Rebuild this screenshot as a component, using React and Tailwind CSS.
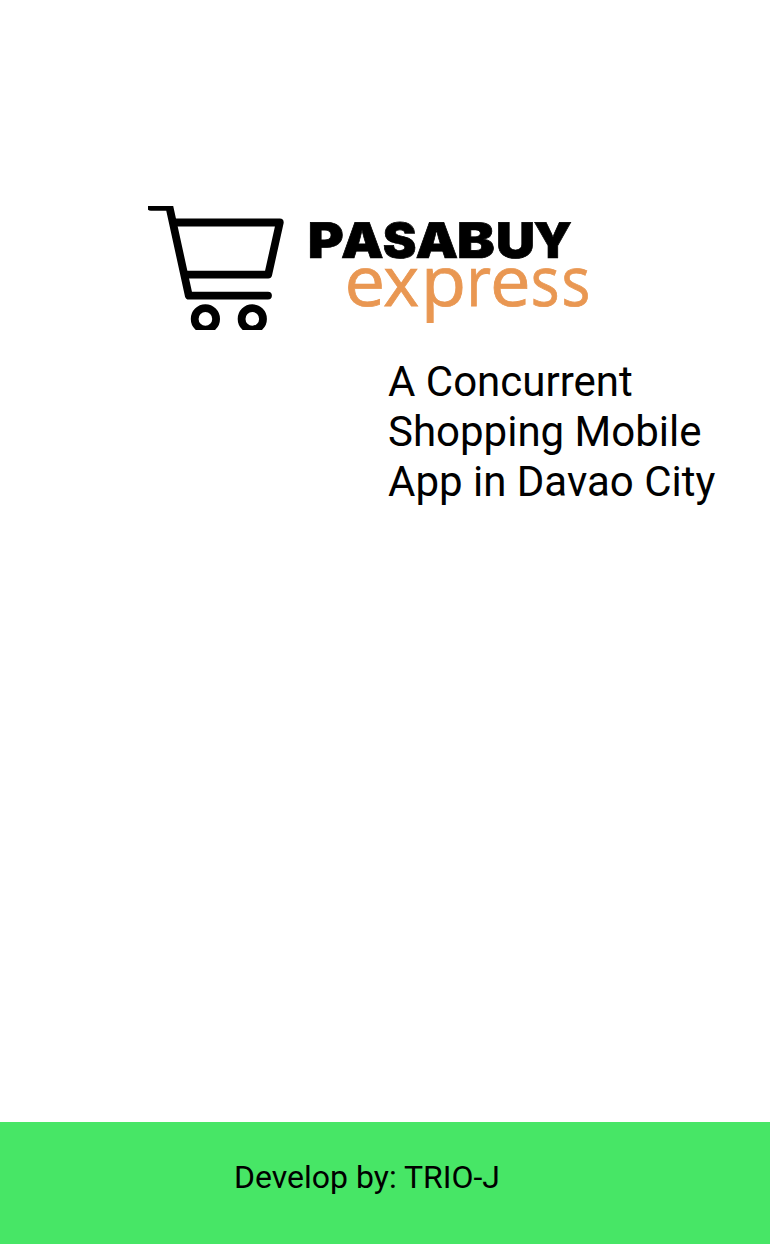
const TITLE = [
  ['P', 307.8, 36],
  ['A', 341, 42.7],
  ['S', 382.7, 33.7],
  ['A', 415.6, 42.7],
  ['B', 457, 37.8],
  ['U', 496, 39],
  ['Y', 533.4, 38.4],
];

const SUBTITLE = [
  ['e', 344.6, 40.6],
  ['x', 383.3, 35.8],
  ['p', 420.7, 45.5],
  ['r', 466.2, 24.8],
  ['e', 490, 40.6],
  ['s', 530.8, 28.8],
  ['s', 561.5, 28.8],
];

function Word({ letters, y, className }) {
  return (
    <text y={y} textRendering="geometricPrecision" className={className}>
      {letters.map(([char, x, width], i) => (
        <tspan key={i} x={x} textLength={width} lengthAdjust="spacingAndGlyphs">
          {char}
        </tspan>
      ))}
    </text>
  );
}

function Logo() {
  return (
    <svg
      className="block h-[124px] w-[442px] overflow-hidden"
      viewBox="148 206 442 124"
      role="img"
      aria-label="Pasabuy express"
    >
      <g fill="none" stroke="#000" strokeWidth="7.8" strokeLinecap="round" strokeLinejoin="round">
        <path d="M151 206.8H169.4L188.8 295.6H268" />
        <path d="M176 222.5H279.8L268.2 274.6H187" />
        <circle cx="205.4" cy="318.9" r="10.7" />
        <circle cx="252.3" cy="318.9" r="10.7" />
      </g>
      <Word
        letters={TITLE}
        y="258.2"
        className="fill-black stroke-black stroke-[0.7px] font-['Inter',sans-serif] text-[49px] font-black"
      />
      <Word
        letters={SUBTITLE}
        y="306.3"
        className="fill-[#e99752] stroke-[#e99752] stroke-[0.8px] font-['Open_Sans',sans-serif] text-[69px] font-medium"
      />
    </svg>
  );
}

export default function App() {
  return (
    <div className="flex h-[1244px] w-[770px] flex-col bg-white font-['Roboto',sans-serif] text-black">
      <main className="flex flex-1 flex-col pt-[206px]">
        <div className="pl-[148px]">
          <Logo />
        </div>
        <h1 className="mt-[27px] ml-[388px] w-[340px] text-[42px] leading-[50px] font-normal">
          A Concurrent Shopping Mobile App in Davao City
        </h1>
      </main>
      <footer className="h-[122px] bg-[#47e666] pt-[36px] pl-[234px]">
        <p className="text-[32px] leading-[38px]">Develop by: TRIO-J</p>
      </footer>
    </div>
  );
}
